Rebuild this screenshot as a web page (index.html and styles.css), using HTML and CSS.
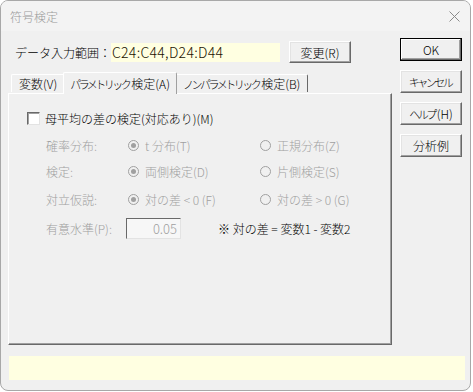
FILE: index.html
```html
<!DOCTYPE html>
<html lang="ja">
<head>
    <meta charset="UTF-8">
    <title>符号検定</title>
    <link rel="stylesheet" href="styles.css">
</head>
<body>
    <div class="window">
        <div class="titlebar">
            <span class="title">符号検定</span>
            <svg class="close" width="11" height="11" viewBox="0 0 11 11">
                <path d="M0.5 0.5 L10.5 10.5 M10.5 0.5 L0.5 10.5" stroke="#8a8a8a" stroke-width="1" fill="none"/>
            </svg>
        </div>

        <div class="client">
            <div class="main">
                <div class="left">
                    <div class="data-row">
                        <span class="data-label">データ入力範囲：</span>
                        <span class="data-value">C24:C44,D24:D44</span>
                        <button class="btn btn-change">変更(R)</button>
                    </div>

                    <div class="tabs">
                        <div class="tab">変数(V)</div>
                        <div class="tab active"><span class="kana">パラメトリック</span>検定(A)</div>
                        <div class="tab"><span class="kana">ノンパラメトリック</span>検定(B)</div>
                    </div>

                    <div class="panel">
                        <div class="check-row">
                            <span class="checkbox"></span>
                            <span>母平均の差の検定(対応あり)(M)</span>
                        </div>

                        <div class="options">
                            <div class="opt-label">確率分布:</div>
                            <div class="radio checked"><span class="dot"></span>t 分布(T)</div>
                            <div class="radio"><span class="dot"></span>正規分布(Z)</div>

                            <div class="opt-label">検定:</div>
                            <div class="radio checked"><span class="dot"></span>両側検定(D)</div>
                            <div class="radio"><span class="dot"></span>片側検定(S)</div>

                            <div class="opt-label">対立仮説:</div>
                            <div class="radio checked"><span class="dot"></span>対の差 &lt; 0 (F)</div>
                            <div class="radio"><span class="dot"></span>対の差 &gt; 0 (G)</div>

                            <div class="opt-label">有意水準(P):</div>
                            <div class="level"><span class="level-box">0.05</span></div>
                            <div class="note">※ 対の差 = 変数1 - 変数2</div>
                        </div>
                    </div>
                </div>

                <div class="right">
                    <button class="btn btn-default">OK</button>
                    <button class="btn"><span class="kana">キャンセル</span></button>
                    <button class="btn"><span class="kana">ヘルプ</span>(H)</button>
                    <button class="btn">分析例</button>
                </div>
            </div>

            <div class="status"></div>
        </div>
    </div>
</body>
</html>
```

FILE: styles.css
```css
* {
    margin: 0;
    padding: 0;
    box-sizing: border-box;
    font-family: "Noto Sans CJK JP", "Noto Sans", sans-serif;
    font-weight: 300;
}

body {
    background: #ffffff;
    width: 473px;
    height: 392px;
    overflow: hidden;
    font-size: 12px;
    color: #000;
}

.window {
    width: 471px;
    height: 391px;
    border: 1px solid #a8a8a8;
    border-radius: 8px;
    background: #f0f0f0;
    overflow: hidden;
    display: flex;
    flex-direction: column;
}

.titlebar {
    height: 30px;
    background: #f3f3f3;
    display: flex;
    align-items: center;
    padding: 0 0 0 9px;
    flex-shrink: 0;
}

.title {
    color: #999;
    font-size: 12px;
    flex: 1;
    padding-top: 1px;
}

.close {
    margin-right: 10px;
}

.client {
    flex: 1;
    padding: 0 5px 0 7px;
}

.main {
    display: flex;
}

.left {
    width: 384px;
}

.data-row {
    display: flex;
    align-items: center;
    height: 22px;
    margin-top: 10px;
}

.data-label {
    width: 103px;
    padding-left: 7px;
    font-size: 12px;
    white-space: nowrap;
}

.data-value {
    width: 169px;
    height: 19px;
    line-height: 19px;
    background: #ffffe1;
    font-size: 14px;
    color: #1a1200;
    padding-left: 1px;
    letter-spacing: 0.3px;
}

.kana {
    font-size: 11px;
    letter-spacing: -2.5px;
    margin-right: 2px;
}

.btn {
    width: 62px;
    height: 23px;
    background: #f0f0f0;
    border: 1px solid;
    border-color: #fff #696969 #696969 #fff;
    box-shadow: inset -1px -1px 0 #a0a0a0, inset 1px 1px 0 #e3e3e3;
    font-size: 12px;
    color: #000;
    display: flex;
    align-items: center;
    justify-content: center;
}

.btn-change {
    margin-left: 9px;
    height: 22px;
}

.btn-default {
    border: 1px solid #000;
    box-shadow: inset -1px -1px 0 #696969, inset 1px 1px 0 #fff, inset -2px -2px 0 #a0a0a0;
}

.tabs {
    display: flex;
    align-items: flex-end;
    height: 22px;
    margin-top: 8px;
    padding-left: 3px;
    position: relative;
    z-index: 1;
}

.tab {
    height: 18px;
    padding: 0 7px;
    border: 1px solid;
    border-color: #fff #696969 transparent #fff;
    border-bottom: none;
    border-radius: 2px 2px 0 0;
    display: flex;
    align-items: center;
    white-space: nowrap;
    margin-bottom: 1px;
}

.tab.active {
    height: 22px;
    padding: 0 6px;
    margin: 0 -2px -1px;
    background: #f0f0f0;
    border-right-color: #a0a0a0;
    position: relative;
}

.panel {
    height: 252px;
    border: 1px solid;
    border-color: #fff #696969 #696969 #fff;
    box-shadow: inset -1px -1px 0 #a0a0a0;
    padding: 17px 0 0 18px;
}

.check-row {
    display: flex;
    align-items: center;
    gap: 5px;
    height: 14px;
}

.checkbox {
    width: 13px;
    height: 13px;
    background: #fff;
    border: 1px solid;
    border-color: #696969 #e3e3e3 #e3e3e3 #696969;
    box-shadow: inset 1px 1px 0 #a0a0a0;
}

.options {
    display: grid;
    grid-template-columns: 82px 132px auto;
    grid-template-rows: 26px 27px 28px 30px;
    align-items: center;
    margin: 7px 0 0 19px;
    color: #a0a0a0;
}

.radio {
    display: flex;
    align-items: center;
    gap: 6px;
}

.dot {
    width: 11px;
    height: 11px;
    border-radius: 50%;
    border: 1px solid #a0a0a0;
    background: #f0f0f0;
    display: flex;
    align-items: center;
    justify-content: center;
}

.radio.checked .dot::after {
    content: '';
    width: 5px;
    height: 5px;
    border-radius: 50%;
    background: #a0a0a0;
}

.level-box {
    display: block;
    width: 55px;
    height: 21px;
    line-height: 20px;
    text-align: right;
    padding-right: 3px;
    background: #f7f7f7;
    border: 1px solid;
    border-color: #696969 #e3e3e3 #e3e3e3 #696969;
    font-size: 13px;
    color: #a0a0a0;
    margin-left: -2px;
}

.note {
    color: #000;
    margin-left: -42px;
    white-space: nowrap;
}

.right {
    margin-left: 8px;
    margin-top: 7px;
    display: flex;
    flex-direction: column;
    gap: 9px;
}

.status {
    height: 24px;
    width: 456px;
    margin: 11px 0 0 1px;
    background: #ffffe1;
}
```
